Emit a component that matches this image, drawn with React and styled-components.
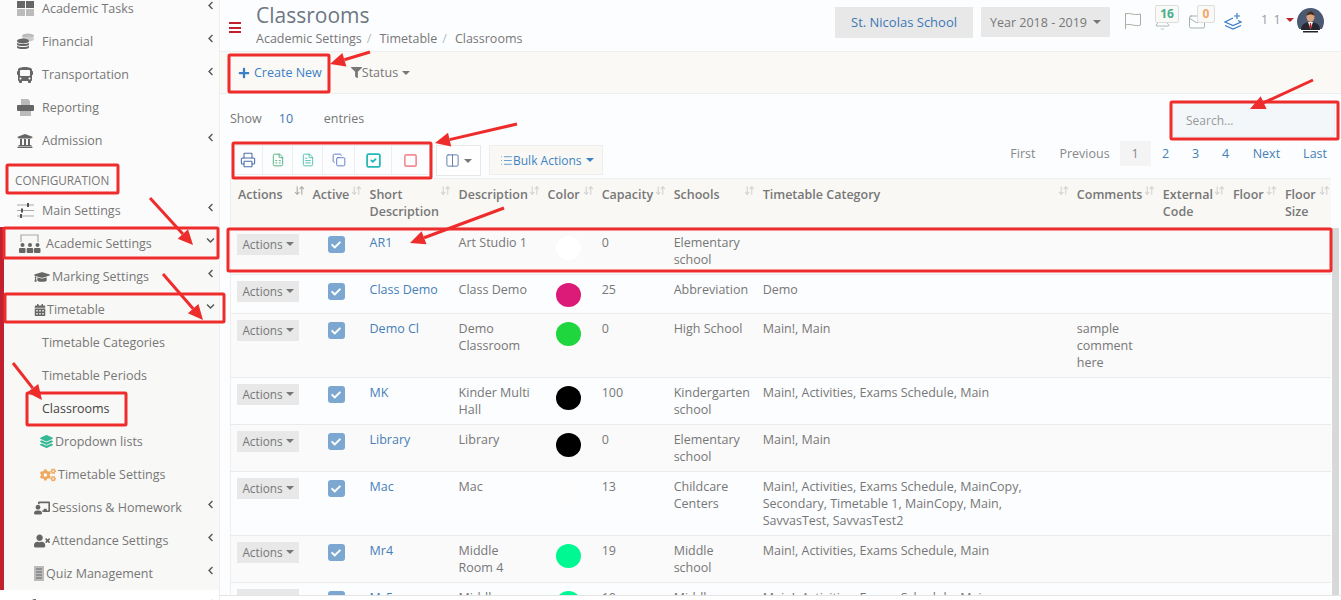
import React from 'react';
import styled, { createGlobalStyle } from 'styled-components';
import {
  FaBus, FaCalendarAlt, FaCheck, FaChevronDown, FaChevronLeft, FaChalkboardTeacher, FaCogs,
  FaFilter, FaGraduationCap, FaLayerGroup, FaPlus, FaUniversity, FaUserTimes, FaWrench,
} from 'react-icons/fa';
import { ArrowDownUp, Bell, Columns2, Copy, FileSpreadsheet, FileText, List, Mail, Printer, Square, SquareCheck } from 'lucide-react';

const GlobalStyle = createGlobalStyle`
  html, body {
    margin: 0;
    overflow: hidden;
  }

  body {
    font-family: "Open Sans", "Liberation Sans", sans-serif;
    font-size: 12.5px;
    color: #777;
  }
`;

const Page = styled.div`
  display: flex;
  height: 600px;
  overflow: hidden;
  position: relative;
  width: 1341px;
`;

const Sidebar = styled.nav`
  background: #fff;
  flex: 0 0 220px;
  height: 600px;
  overflow: hidden;
`;

const TopList = styled.div`
  background: #fbfbfb;
  border-right: 1px solid #eee;
  margin-top: -8px;
`;

const SideItem = styled.div`
  align-items: center;
  background: ${(p) => (p.$plain ? '#fff' : 'transparent')};
  color: ${(p) => (p.$active ? '#444' : '#777')};
  display: flex;
  height: 33px;
  padding-left: ${(p) => p.$indent}px;
  padding-right: 4px;
`;

const SideIcon = styled.span`
  align-items: center;
  color: #666;
  display: flex;
  flex: 0 0 ${(p) => p.$width}px;
  justify-content: flex-start;
  margin-right: ${(p) => p.$gap}px;
`;

const Chevron = styled.span`
  color: #555;
  display: flex;
  font-size: 9px;
  margin-left: auto;
  margin-top: -7px;
`;

const SectionLabel = styled.div`
  color: #777;
  font-size: 11.75px;
  height: 37px;
  line-height: 47px;
  padding-left: 15px;
`;

const Group = styled.div`
  background: #f8f8f6;
  border-left: 4px solid #c1202f;
`;

const Main = styled.main`
  background: #fcfdfe;
  border-bottom: 1px solid #e4e4e4;
  box-sizing: border-box;
  flex: 1;
  height: 596px;
  min-width: 0;
  overflow: hidden;
`;

const TopBar = styled.header`
  align-items: flex-start;
  border-bottom: 1px solid #eee;
  box-sizing: border-box;
  display: flex;
  height: 52px;
  padding-left: 9px;
`;

const Burger = styled.div`
  border-bottom: 2px solid #c1202f;
  border-top: 2px solid #c1202f;
  height: 7px;
  margin-top: 22px;
  position: relative;
  width: 12px;

  &::after {
    background: #c1202f;
    content: '';
    height: 2px;
    left: 0;
    position: absolute;
    right: 0;
    top: 3px;
  }
`;

const TitleBlock = styled.div`
  margin-left: 15px;
`;

const Title = styled.h1`
  color: #6d7783;
  font-size: 21px;
  font-weight: 400;
  line-height: 28px;
  margin: 1px 0 1px;
`;

const Crumbs = styled.div`
  color: #777;
  display: flex;
  line-height: 18px;
`;

const CrumbSep = styled.span`
  color: #bbb;
  margin: 0 8px 0 5px;
`;

const TopRight = styled.div`
  align-items: flex-start;
  display: flex;
  margin-left: auto;
  padding-right: 17px;
  padding-top: 7px;
`;

const SchoolBox = styled.div`
  background: #e8e8e8;
  color: #3b78b5;
  font-size: 13px;
  height: 31px;
  line-height: 31px;
  text-align: center;
  width: 138px;
`;

const YearBox = styled.div`
  align-items: center;
  background: #e8e8e8;
  color: #777;
  display: flex;
  gap: 6px;
  height: 30px;
  justify-content: center;
  margin-left: 8px;
  width: 129px;
`;

const Caret = styled.span`
  border-left: 4px solid transparent;
  border-right: 4px solid transparent;
  border-top: 4px solid ${(p) => p.$color || '#777'};
  display: inline-block;
  height: 0;
  width: 0;
`;

const IconSlot = styled.div`
  height: 30px;
  margin-left: ${(p) => p.$left}px;
  position: relative;
  width: ${(p) => p.$width}px;
`;

const SlotIcon = styled.span`
  display: flex;
  left: 0;
  position: absolute;
  top: ${(p) => p.$top}px;
`;

const CountBadge = styled.span`
  background: #f9f9f6;
  border: 1px solid #ddd;
  border-radius: 2px;
  box-sizing: border-box;
  color: ${(p) => p.$color};
  font-size: 12px;
  font-weight: 700;
  height: 18px;
  left: ${(p) => p.$left}px;
  line-height: 16px;
  position: absolute;
  text-align: center;
  top: -2px;
  width: ${(p) => p.$width}px;
`;

const UserName = styled.span`
  color: #999;
  letter-spacing: 1px;
  line-height: 26px;
  margin-left: 19px;
  width: 20px;
  white-space: nowrap;
`;

const UserCaret = styled(Caret)`
  margin-left: 5px;
  margin-top: 11px;
`;

const Avatar = styled.svg`
  margin-left: 3px;
  margin-top: 1px;
`;

const ToolBar = styled.div`
  align-items: center;
  background: #faf9f6;
  border-bottom: 1px solid #eee;
  box-sizing: border-box;
  display: flex;
  height: 42px;
  padding-left: 18px;
`;

const CreateLink = styled.a`
  align-items: center;
  color: #3b7fc4;
  display: flex;
  gap: 4px;
`;

const StatusMenu = styled.div`
  align-items: center;
  color: #777;
  display: flex;
  margin-left: 29px;
`;

const StatusCaret = styled(Caret)`
  margin-left: 4px;
`;

const Content = styled.div`
  padding: 9px 6px 0 10px;
`;

const ShowRow = styled.div`
  display: flex;
  justify-content: space-between;
`;

const ShowEntries = styled.div`
  display: flex;
  line-height: 18px;
  padding-top: 7px;
`;

const ShowValue = styled.span`
  color: #3b78b5;
  margin-left: 17px;
  width: 45px;
`;

const SearchBox = styled.input`
  background: #f4f7fa;
  border: 1px solid #edf0f3;
  border-radius: 2px;
  box-sizing: border-box;
  color: #777;
  font-family: inherit;
  font-size: 12px;
  height: 34px;
  outline: none;
  padding: 0 12px;
  width: 162px;

  &::placeholder {
    color: #999;
  }
`;

const ActionRow = styled.div`
  display: flex;
  height: 37px;
  justify-content: space-between;
  margin-top: 4px;
`;

const ButtonRow = styled.div`
  align-items: flex-start;
  display: flex;
  padding-top: 4px;
  padding-left: 3px;
`;

const ExportGroup = styled.div`
  display: flex;
  height: 30px;
  margin-right: 6px;
`;

const ExportButton = styled.button`
  align-items: center;
  background: #fcfdfe;
  border: 1px solid #eee;
  border-left-width: ${(p) => (p.$first ? 1 : 0)}px;
  box-sizing: border-box;
  color: ${(p) => p.$color};
  display: flex;
  justify-content: center;
  padding: 0;
  width: ${(p) => p.$width}px;
`;

const ColumnsButton = styled.button`
  align-items: center;
  background: #fff;
  border: 1px solid #e8e8e8;
  box-sizing: border-box;
  color: #777;
  display: flex;
  gap: 4px;
  height: 31px;
  justify-content: center;
  padding: 0;
  width: 45px;
`;

const BulkButton = styled.button`
  align-items: center;
  background: #f9f8f5;
  border: 1px solid #eee;
  box-sizing: border-box;
  color: #3d83c4;
  display: flex;
  font-family: inherit;
  font-size: 12px;
  height: 30px;
  margin-left: 8px;
  padding: 0 0 0 10px;
  width: 114px;
`;

const BulkCaret = styled(Caret)`
  margin-left: 4px;
`;

const Pager = styled.div`
  align-items: center;
  display: flex;
  height: 25px;
  padding-right: 8px;
`;

const PageLink = styled.span`
  background: ${(p) => (p.$current ? '#f4f4f4' : 'transparent')};
  color: ${(p) => (p.$muted || p.$current ? '#888' : '#4680b8')};
  display: block;
  line-height: 25px;
  margin-left: ${(p) => p.$left}px;
  text-align: center;
  width: ${(p) => (p.$box ? `${p.$box}px` : 'auto')};
`;

const TableArea = styled.div`
  display: flex;
`;

const Scroller = styled.div`
  background: #d8d8d8;
  flex: 0 0 7px;
  height: 400px;
  margin-left: 1px;
  margin-top: 50px;
`;

const Table = styled.table`
  border-collapse: collapse;
  border-left: 1px solid #eee;
  flex: 0 0 1101px;
  table-layout: fixed;
  width: 1101px;
`;

const Col = styled.col`
  width: ${(p) => p.$width}px;
`;

const HeadRow = styled.tr`
  background: #f9f8f5;
  border-top: 1px solid #eee;
`;

const Th = styled.th`
  box-sizing: border-box;
  color: #777;
  font-weight: 600;
  height: 49px;
  line-height: 17px;
  padding: 7px 1px 0 7px;
  text-align: left;
  vertical-align: top;
`;

const ThInner = styled.div`
  display: flex;
  justify-content: space-between;
`;

const SortIcon = styled.span`
  color: ${(p) => (p.$dark ? '#aaa' : '#d2d2d2')};
  display: flex;
  flex: 0 0 auto;
  margin-top: -1px;
`;

const Row = styled.tr`
  background: ${(p) => (p.$odd ? '#fafafa' : '#fcfdfe')};
  border-top: 1px solid #e8eaec;
`;

const Td = styled.td`
  box-sizing: border-box;
  line-height: 17px;
  padding: 6px 6px 6px 7px;
  vertical-align: top;
`;

const RowLink = styled.a`
  color: #4680b8;
`;

const ActionsButton = styled.button`
  align-items: center;
  background: #e8e8e8;
  border: 0;
  color: #777;
  display: flex;
  font-family: inherit;
  font-size: 11.8px;
  gap: 3px;
  height: 21px;
  justify-content: center;
  margin-left: -1px;
  padding: 0 0 1px;
  width: 62px;
`;

const CheckBox = styled.span`
  align-items: center;
  background: #7ba7d0;
  border-radius: 3px;
  color: #fff;
  display: flex;
  font-size: 10px;
  height: 17px;
  justify-content: center;
  margin: 2px 0 0 15px;
  width: 17px;
`;

const Swatch = styled.span`
  background: ${(p) => p.$color};
  border-radius: 50%;
  display: block;
  height: 24px;
  margin: 2px 0 0 8px;
  width: 25px;
`;

const Overlay = styled.svg`
  left: 0;
  pointer-events: none;
  position: absolute;
  top: 0;
`;

const COLUMNS = [
  ['Actions', 75], ['Active', 57], ['Short Description', 89], ['Description', 89], ['Color', 54], ['Capacity', 72],
  ['Schools', 89], ['Timetable Category', 314], ['Comments', 86], ['External Code', 70], ['Floor', 52], ['Floor Size', 53],
];

const ALL_CATS = 'Main!, Activities, Exams Schedule, Main';

const ROWS = [
  { code: 'AR1', desc: 'Art Studio 1', color: '#ffffff', cap: 0, school: 'Elementary school', cats: '' },
  { code: 'Class Demo', desc: 'Class Demo', color: '#dc1a78', cap: 25, school: 'Abbreviation', cats: 'Demo' },
  { code: 'Demo Cl', desc: 'Demo Classroom', color: '#1fd63f', cap: 0, school: 'High School', cats: 'Main!, Main', comments: 'sample comment here' },
  { code: 'MK', desc: 'Kinder Multi Hall', color: '#000000', cap: 100, school: 'Kindergarten school', cats: ALL_CATS },
  { code: 'Library', desc: 'Library', color: '#000000', cap: 0, school: 'Elementary school', cats: 'Main!, Main' },
  { code: 'Mac', desc: 'Mac', color: '#fdfdfd', cap: 13, school: 'Childcare Centers', cats: 'Main!, Activities, Exams Schedule, MainCopy, Secondary, Timetable 1, MainCopy, Main, SavvasTest, SavvasTest2' },
  { code: 'Mr4', desc: 'Middle Room 4', color: '#00f892', cap: 19, school: 'Middle school', cats: ALL_CATS },
  { code: 'Mr5', desc: 'Middle Room 5', color: '#00f892', cap: 19, school: 'Middle school', cats: ALL_CATS },
];

const BOXES = [
  [7, 165, 111, 28], [4, 228, 214, 30], [5, 294, 219, 28], [27, 393, 99, 32], [229, 55, 100, 37],
  [233, 143, 198, 35], [228, 229, 1103, 42], [1171, 102, 167, 37],
];

const ARROWS = [
  [150, 198, 193, 245], [163, 274, 203, 320], [13, 363, 42, 400], [370, 52, 330, 64],
  [517, 124, 435, 143], [1313, 80, 1250, 109], [504, 208, 410, 243],
];

const Arrow = ({ from, to }) => {
  const [x1, y1] = from;
  const [x2, y2] = to;
  const len = Math.hypot(x2 - x1, y2 - y1);
  const ux = (x2 - x1) / len;
  const uy = (y2 - y1) / len;
  const bx = x2 - ux * 15;
  const by = y2 - uy * 15;
  const head = `${x2},${y2} ${bx - uy * 7},${by + ux * 7} ${bx + uy * 7},${by - ux * 7}`;

  return (
    <>
      <line x1={x1} y1={y1} x2={bx} y2={by} stroke="#ee2c2c" strokeWidth="3" />
      <polygon points={head} fill="#ee2c2c" />
    </>
  );
};

const TasksIcon = () => (
  <svg width="17" height="15" viewBox="0 0 17 15">
    <rect width="8" height="7" fill="#666" />
    <rect x="9" width="8" height="7" fill="#666" />
    <rect y="8" width="8" height="7" fill="#bbb" />
    <rect x="9" y="8" width="8" height="7" fill="#bbb" />
  </svg>
);

const CoinsIcon = () => (
  <svg width="17" height="17" viewBox="0 0 17 17">
    <ellipse cx="11" cy="3" rx="6" ry="2.500" fill="#bbb" />
    <ellipse cx="11" cy="6" rx="6" ry="2.500" fill="#ccc" />
    <g fill="#666">
      <ellipse cx="6" cy="8" rx="6" ry="2.500" />
      <path d="M0 9.500c1 2 11 2 12 0v2c-1 2-11 2-12 0z" />
      <path d="M0 12.500c1 2 11 2 12 0v2c-1 2-11 2-12 0z" />
    </g>
  </svg>
);

const ReportIcon = () => (
  <svg width="17" height="17" viewBox="0 0 17 17">
    <path d="M4 0h7l2 2v4H4z" fill="#bbb" />
    <rect y="6" width="17" height="6" rx="1" fill="#666" />
    <rect x="3" y="12" width="11" height="5" fill="#bbb" />
  </svg>
);

const SlidersIcon = () => (
  <svg width="17" height="15" viewBox="0 0 17 15">
    <path d="M0 2h17M0 7.500h17M0 13h17" stroke="#aaa" strokeWidth="1.200" />
    <path d="M11 0v4M5 5.500v4M4 11v4" stroke="#555" strokeWidth="2" />
  </svg>
);

const BoardIcon = () => (
  <svg width="22" height="19" viewBox="0 0 22 19">
    <path d="M2 8V1h17v7" fill="none" stroke="#aaa" strokeWidth="1.2" />
    <g fill="#666">
      <circle cx="3.5" cy="11" r="2" /><circle cx="11" cy="11" r="2" /><circle cx="18.5" cy="11" r="2" />
      <rect x="0" y="14" width="6.5" height="5" rx="1" />
      <rect x="7.7" y="14" width="6.5" height="5" rx="1" />
      <rect x="15" y="14" width="6.5" height="5" rx="1" />
    </g>
  </svg>
);

const QuizIcon = () => (
  <svg width="10" height="15" viewBox="0 0 10 15">
    <rect width="10" height="15" fill="#bbb" />
    <path d="M2 3h6M2 6h6M2 9h6M2 12h6" stroke="#666" strokeWidth="1" />
  </svg>
);

const FlagIcon = () => (
  <svg width="18" height="18" viewBox="0 0 18 18" fill="none" stroke="#a9aea0" strokeWidth="1">
    <path d="M1.500 1v16" />
    <path d="M1.500 2c4-2 8 2 15 0v11c-6 2-10-2-15 0" />
  </svg>
);

const StackPlusIcon = () => (
  <svg width="18" height="17" viewBox="0 0 18 17" fill="none" stroke="#3b7fc4" strokeWidth="1.2">
    <path d="M9 5 1 9l8 3.5L17 9l-3-1.5" />
    <path d="M1 12.500 9 16l8-3.500" />
    <path d="M13 0v6M10 3h6" />
  </svg>
);

const AvatarIcon = () => (
  <Avatar width="27" height="27" viewBox="0 0 27 27">
    <defs>
      <clipPath id="avatar-clip"><circle cx="13.5" cy="13.5" r="13.5" /></clipPath>
    </defs>
    <g clipPath="url(#avatar-clip)">
      <rect width="27" height="27" fill="#fff" />
      <rect width="27" height="21" fill="#4b5a72" />
      <path d="M4 22c0-6 5-8 9.500-8s9.500 2 9.500 8z" fill="#26272e" />
      <path d="M11 14h5l-2.500 7z" fill="#fff" />
      <path d="M13 15h1l.8 5h-2.600z" fill="#c1202f" />
      <ellipse cx="13.500" cy="9" rx="4" ry="5" fill="#d9a582" />
      <path d="M9.500 8c0-6 8-6 8 0-2-2-6-2-8 0z" fill="#4a2c1c" />
      <rect x="6" y="23" width="15" height="1.500" fill="#222" />
    </g>
  </Avatar>
);

const SortArrows = ({ dark }) => (
  <SortIcon $dark={dark}><ArrowDownUp size={11} strokeWidth={2.4} /></SortIcon>
);

const MenuChevron = ({ down }) => (
  <Chevron>{down ? <FaChevronDown /> : <FaChevronLeft />}</Chevron>
);

const App = () => (
  <Page>
    <GlobalStyle />
    <Sidebar>
      <TopList>
        <SideItem $indent={17}><SideIcon $width={17} $gap={8}><TasksIcon /></SideIcon>Academic Tasks<MenuChevron /></SideItem>
        <SideItem $indent={17}><SideIcon $width={17} $gap={8}><CoinsIcon /></SideIcon>Financial<MenuChevron /></SideItem>
        <SideItem $indent={17}><SideIcon $width={17} $gap={8}><FaBus size={16} /></SideIcon>Transportation<MenuChevron /></SideItem>
        <SideItem $indent={17}><SideIcon $width={17} $gap={8}><ReportIcon /></SideIcon>Reporting</SideItem>
        <SideItem $indent={17}><SideIcon $width={17} $gap={8}><FaUniversity size={16} /></SideIcon>Admission<MenuChevron /></SideItem>
        <SectionLabel>CONFIGURATION</SectionLabel>
        <SideItem $indent={17}><SideIcon $width={17} $gap={8}><SlidersIcon /></SideIcon>Main Settings<MenuChevron /></SideItem>
        <Group>
          <SideItem $indent={15}><SideIcon $width={22} $gap={5}><BoardIcon /></SideIcon>Academic Settings<MenuChevron down /></SideItem>
          <SideItem $indent={30}><SideIcon $width={16} $gap={2}><FaGraduationCap size={16} /></SideIcon>Marking Settings<MenuChevron /></SideItem>
          <SideItem $indent={30}><SideIcon $width={12} $gap={1}><FaCalendarAlt size={12} /></SideIcon>Timetable<MenuChevron down /></SideItem>
          <SideItem $indent={38}>Timetable Categories</SideItem>
          <SideItem $indent={38}>Timetable Periods</SideItem>
          <SideItem $indent={38} $active>Classrooms</SideItem>
          <SideItem $indent={36}><SideIcon $width={13} $gap={2}><FaLayerGroup size={13} color="#35b894" /></SideIcon>Dropdown lists</SideItem>
          <SideItem $indent={36}><SideIcon $width={16} $gap={2}><FaCogs size={16} color="#f0a860" /></SideIcon>Timetable Settings</SideItem>
          <SideItem $indent={30}><SideIcon $width={16} $gap={2}><FaChalkboardTeacher size={16} /></SideIcon>Sessions &amp; Homework<MenuChevron /></SideItem>
          <SideItem $indent={30}><SideIcon $width={16} $gap={2}><FaUserTimes size={16} /></SideIcon>Attendance Settings<MenuChevron /></SideItem>
          <SideItem $indent={30}><SideIcon $width={10} $gap={2}><QuizIcon /></SideIcon>Quiz Management<MenuChevron /></SideItem>
        </Group>
        <SideItem $indent={24} $plain><SideIcon $width={16} $gap={2}><FaWrench size={15} /></SideIcon><MenuChevron /></SideItem>
      </TopList>
    </Sidebar>

    <Main>
      <TopBar>
        <Burger />
        <TitleBlock>
          <Title>Classrooms</Title>
          <Crumbs>
            Academic Settings<CrumbSep>/</CrumbSep>Timetable<CrumbSep>/</CrumbSep>Classrooms
          </Crumbs>
        </TitleBlock>
        <TopRight>
          <SchoolBox>St. Nicolas School</SchoolBox>
          <YearBox>Year 2018 - 2019 <Caret /></YearBox>
          <IconSlot $left={14} $width={18}>
            <SlotIcon $top={5}><FlagIcon /></SlotIcon>
          </IconSlot>
          <IconSlot $left={12} $width={26}>
            <SlotIcon $top={7}><Bell size={17} strokeWidth={1} color="#8a9a9a" /></SlotIcon>
            <CountBadge $left={1} $width={24} $color="#45b08c">16</CountBadge>
          </IconSlot>
          <IconSlot $left={8} $width={28}>
            <SlotIcon $top={6}><Mail size={18} strokeWidth={1} color="#8a9a9a" /></SlotIcon>
            <CountBadge $left={9} $width={18} $color="#f5a66a">0</CountBadge>
          </IconSlot>
          <IconSlot $left={8} $width={18}>
            <SlotIcon $top={6}><StackPlusIcon /></SlotIcon>
          </IconSlot>
          <UserName>1 1</UserName>
          <UserCaret $color="#c1202f" />
          <AvatarIcon />
        </TopRight>
      </TopBar>

      <ToolBar>
        <CreateLink><FaPlus size={12} />Create New</CreateLink>
        <StatusMenu><FaFilter size={11} />Status<StatusCaret /></StatusMenu>
      </ToolBar>

      <Content>
        <ShowRow>
          <ShowEntries>Show<ShowValue>10</ShowValue>entries</ShowEntries>
          <SearchBox placeholder="Search..." />
        </ShowRow>

        <ActionRow>
          <ButtonRow>
            <ExportGroup>
              <ExportButton $first $width={30} $color="#4a6fa8"><Printer size={16} strokeWidth={1.6} /></ExportButton>
              <ExportButton $width={30} $color="#4fae7d"><FileSpreadsheet size={14} strokeWidth={1.6} /></ExportButton>
              <ExportButton $width={30} $color="#4cc0b0"><FileText size={14} strokeWidth={1.6} /></ExportButton>
              <ExportButton $width={32} $color="#5a78c8"><Copy size={14} strokeWidth={1.6} /></ExportButton>
              <ExportButton $width={37} $color="#22b8b8"><SquareCheck size={17} strokeWidth={2.5} /></ExportButton>
              <ExportButton $width={38} $color="#f58a95"><Square size={15} strokeWidth={2.6} /></ExportButton>
            </ExportGroup>
            <ColumnsButton><Columns2 size={15} strokeWidth={1.5} color="#5a78a8" /><Caret /></ColumnsButton>
            <BulkButton>
              <List size={13} strokeWidth={1.4} />Bulk Actions<BulkCaret $color="#3d83c4" />
            </BulkButton>
          </ButtonRow>
          <Pager>
            <PageLink $muted>First</PageLink>
            <PageLink $muted $left={24}>Previous</PageLink>
            <PageLink $current $left={10} $box={31}>1</PageLink>
            <PageLink $left={0} $box={30}>2</PageLink>
            <PageLink $left={0} $box={30}>3</PageLink>
            <PageLink $left={0} $box={30}>4</PageLink>
            <PageLink $left={12}>Next</PageLink>
            <PageLink $left={23}>Last</PageLink>
          </Pager>
        </ActionRow>

        <TableArea>
          <Table>
            <colgroup>
              {COLUMNS.map(([name, width]) => <Col key={name} $width={width} />)}
            </colgroup>
            <thead>
              <HeadRow>
                {COLUMNS.map(([name], i) => (
                  <Th key={name}>
                    <ThInner>
                      <span>{name}</span>
                      <SortArrows dark={i === 0} />
                    </ThInner>
                  </Th>
                ))}
              </HeadRow>
            </thead>
            <tbody>
              {ROWS.map((row, i) => (
                <Row key={row.code} $odd={i % 2 === 0}>
                  <Td><ActionsButton>Actions <Caret /></ActionsButton></Td>
                  <Td><CheckBox><FaCheck /></CheckBox></Td>
                  <Td><RowLink>{row.code}</RowLink></Td>
                  <Td>{row.desc}</Td>
                  <Td><Swatch $color={row.color} /></Td>
                  <Td>{row.cap}</Td>
                  <Td>{row.school}</Td>
                  <Td>{row.cats}</Td>
                  <Td>{row.comments}</Td>
                  <Td />
                  <Td />
                  <Td />
                </Row>
              ))}
            </tbody>
          </Table>
          <Scroller />
        </TableArea>
      </Content>
    </Main>

    <Overlay width="1341" height="600">
      {BOXES.map(([x, y, w, h]) => (
        <rect key={`${x}-${y}`} x={x} y={y} width={w} height={h} rx="1" fill="none" stroke="#ee2c2c" strokeWidth="3" />
      ))}
      {ARROWS.map(([x1, y1, x2, y2]) => (
        <Arrow key={`${x1}-${y1}`} from={[x1, y1]} to={[x2, y2]} />
      ))}
    </Overlay>
  </Page>
);

export default App;
